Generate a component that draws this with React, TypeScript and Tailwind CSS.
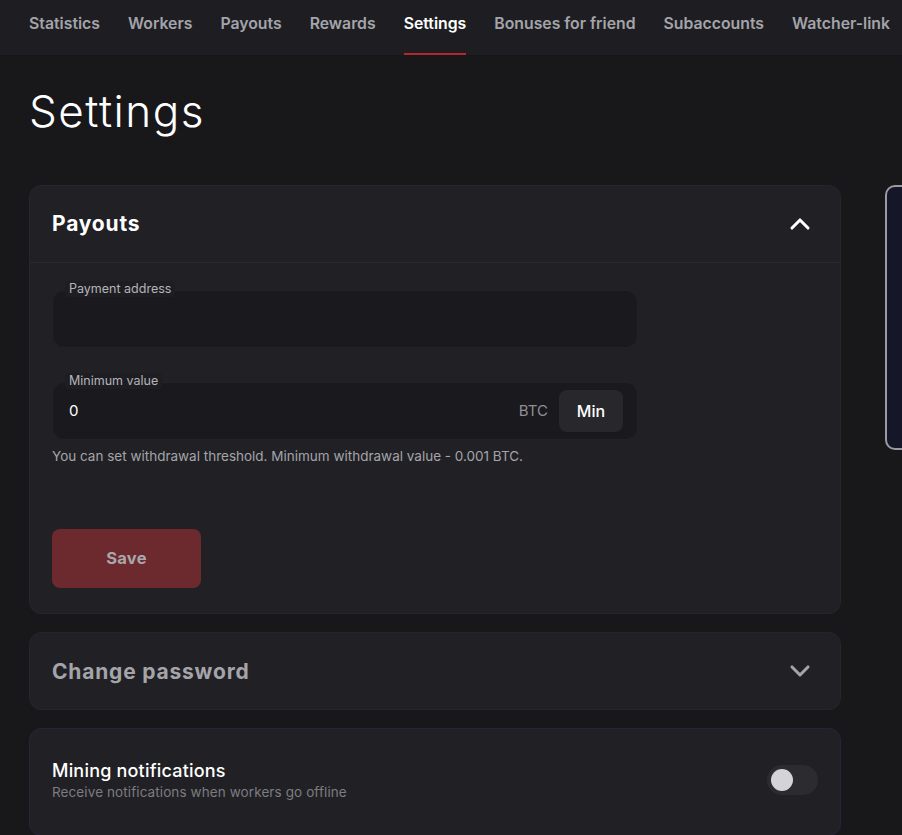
import { ChevronDown, ChevronUp } from 'lucide-react';

const tabs = [
  'Statistics',
  'Workers',
  'Payouts',
  'Rewards',
  'Settings',
  'Bonuses for friend',
  'Subaccounts',
  'Watcher-link',
];

function Field({ label, children }: { label: string; children?: React.ReactNode }) {
  return (
    <div className="relative w-[586px] h-[58px] rounded-[12px] bg-[#1a1a1e] border border-[#232327] flex items-center">
      <span className="absolute -top-[10px] left-[12px] px-[4px] text-[12.5px] leading-[16px] text-[#b4b4ba] bg-[#1e1e22] rounded">
        {label}
      </span>
      {children}
    </div>
  );
}

export default function App() {
  return (
    <div
      className="min-h-[835px] w-full overflow-hidden bg-[#18181b] text-white"
      style={{ fontFamily: 'Inter, "Open Sans", sans-serif' }}
    >
      <nav className="h-[56px] bg-[#1e1e22] border-b border-[#17171a] flex items-stretch gap-[28px] pl-[29px] whitespace-nowrap">
        {tabs.map((t) => (
          <div
            key={t}
            className={
              t === 'Settings'
                ? 'relative flex items-center pb-[8px] text-[15.8px] font-semibold text-white'
                : 'relative flex items-center pb-[8px] text-[15.8px] font-semibold text-[#a4a4aa]'
            }
          >
            {t}
            {t === 'Settings' && (
              <span className="absolute left-0 right-0 bottom-0 h-[2px] bg-[#b3272e]" />
            )}
          </div>
        ))}
      </nav>

      <h1 className="pl-[29px] pt-[28px] text-[44px] leading-[54px] font-light tracking-[1.5px] text-white">
        Settings
      </h1>

      <div className="flex gap-[44px] pl-[29px] mt-[47px]">
        <div className="w-[812px] shrink-0 flex flex-col gap-[18px]">
          <section className="rounded-[12px] bg-[#212125] border border-[#26262a]">
            <div className="h-[77px] flex items-center justify-between px-[22px] border-b border-[#2a2a2e]">
              <span className="text-[21px] font-bold tracking-[0.8px] text-white">Payouts</span>
              <ChevronUp size={32} strokeWidth={2.3} className="text-white mr-[2px]" />
            </div>
            <div className="px-[22px] pt-[27px] pb-[25px]">
              <Field label="Payment address" />
              <div className="mt-[34px]">
                <Field label="Minimum value">
                  <span className="pl-[16px] flex-1 text-[15px] text-white">0</span>
                  <span className="text-[15px] text-[#8e8e94] mr-[11px]">BTC</span>
                  <button className="h-[42px] w-[64px] mr-[14px] rounded-[8px] bg-[#28282c] text-[16px] font-medium text-white">
                    Min
                  </button>
                </Field>
              </div>
              <p className="mt-[6px] text-[13.5px] text-[#a4a4aa]">
                You can set withdrawal threshold. Minimum withdrawal value - 0.001 BTC.
              </p>
              <button className="mt-[63px] w-[149px] h-[59px] rounded-[8px] bg-[#6d2a2e] text-[16.5px] font-bold tracking-[0.3px] text-[#a8a8ac]">
                Save
              </button>
            </div>
          </section>

          <section className="h-[78px] rounded-[12px] bg-[#212125] border border-[#26262a] flex items-center justify-between px-[22px]">
            <span className="text-[21px] font-bold tracking-[0.8px] text-[#a4a4aa]">Change password</span>
            <ChevronDown size={32} strokeWidth={2.3} className="text-[#a4a4aa] mr-[2px]" />
          </section>

          <section className="h-[108px] rounded-[12px] bg-[#212125] border border-[#25253a] flex items-center justify-between px-[22px]">
            <div className="-mt-[4px]">
              <div className="text-[18px] font-medium tracking-[0.2px] text-white leading-[24px]">
                Mining notifications
              </div>
              <div className="text-[13.5px] tracking-[0.1px] text-[#7c7c82] leading-[18px]">
                Receive notifications when workers go offline
              </div>
            </div>
            <div className="w-[51px] h-[30px] rounded-full bg-[#2b2b30] flex items-center px-[4px] -mt-[4px]">
              <div className="w-[22px] h-[22px] rounded-full bg-[#d4d4d6]" />
            </div>
          </section>
        </div>

        <div className="w-[200px] h-[265px] shrink-0 rounded-[10px] border-2 border-[#9a9aa2] bg-[#151728]" />
      </div>
    </div>
  );
}
